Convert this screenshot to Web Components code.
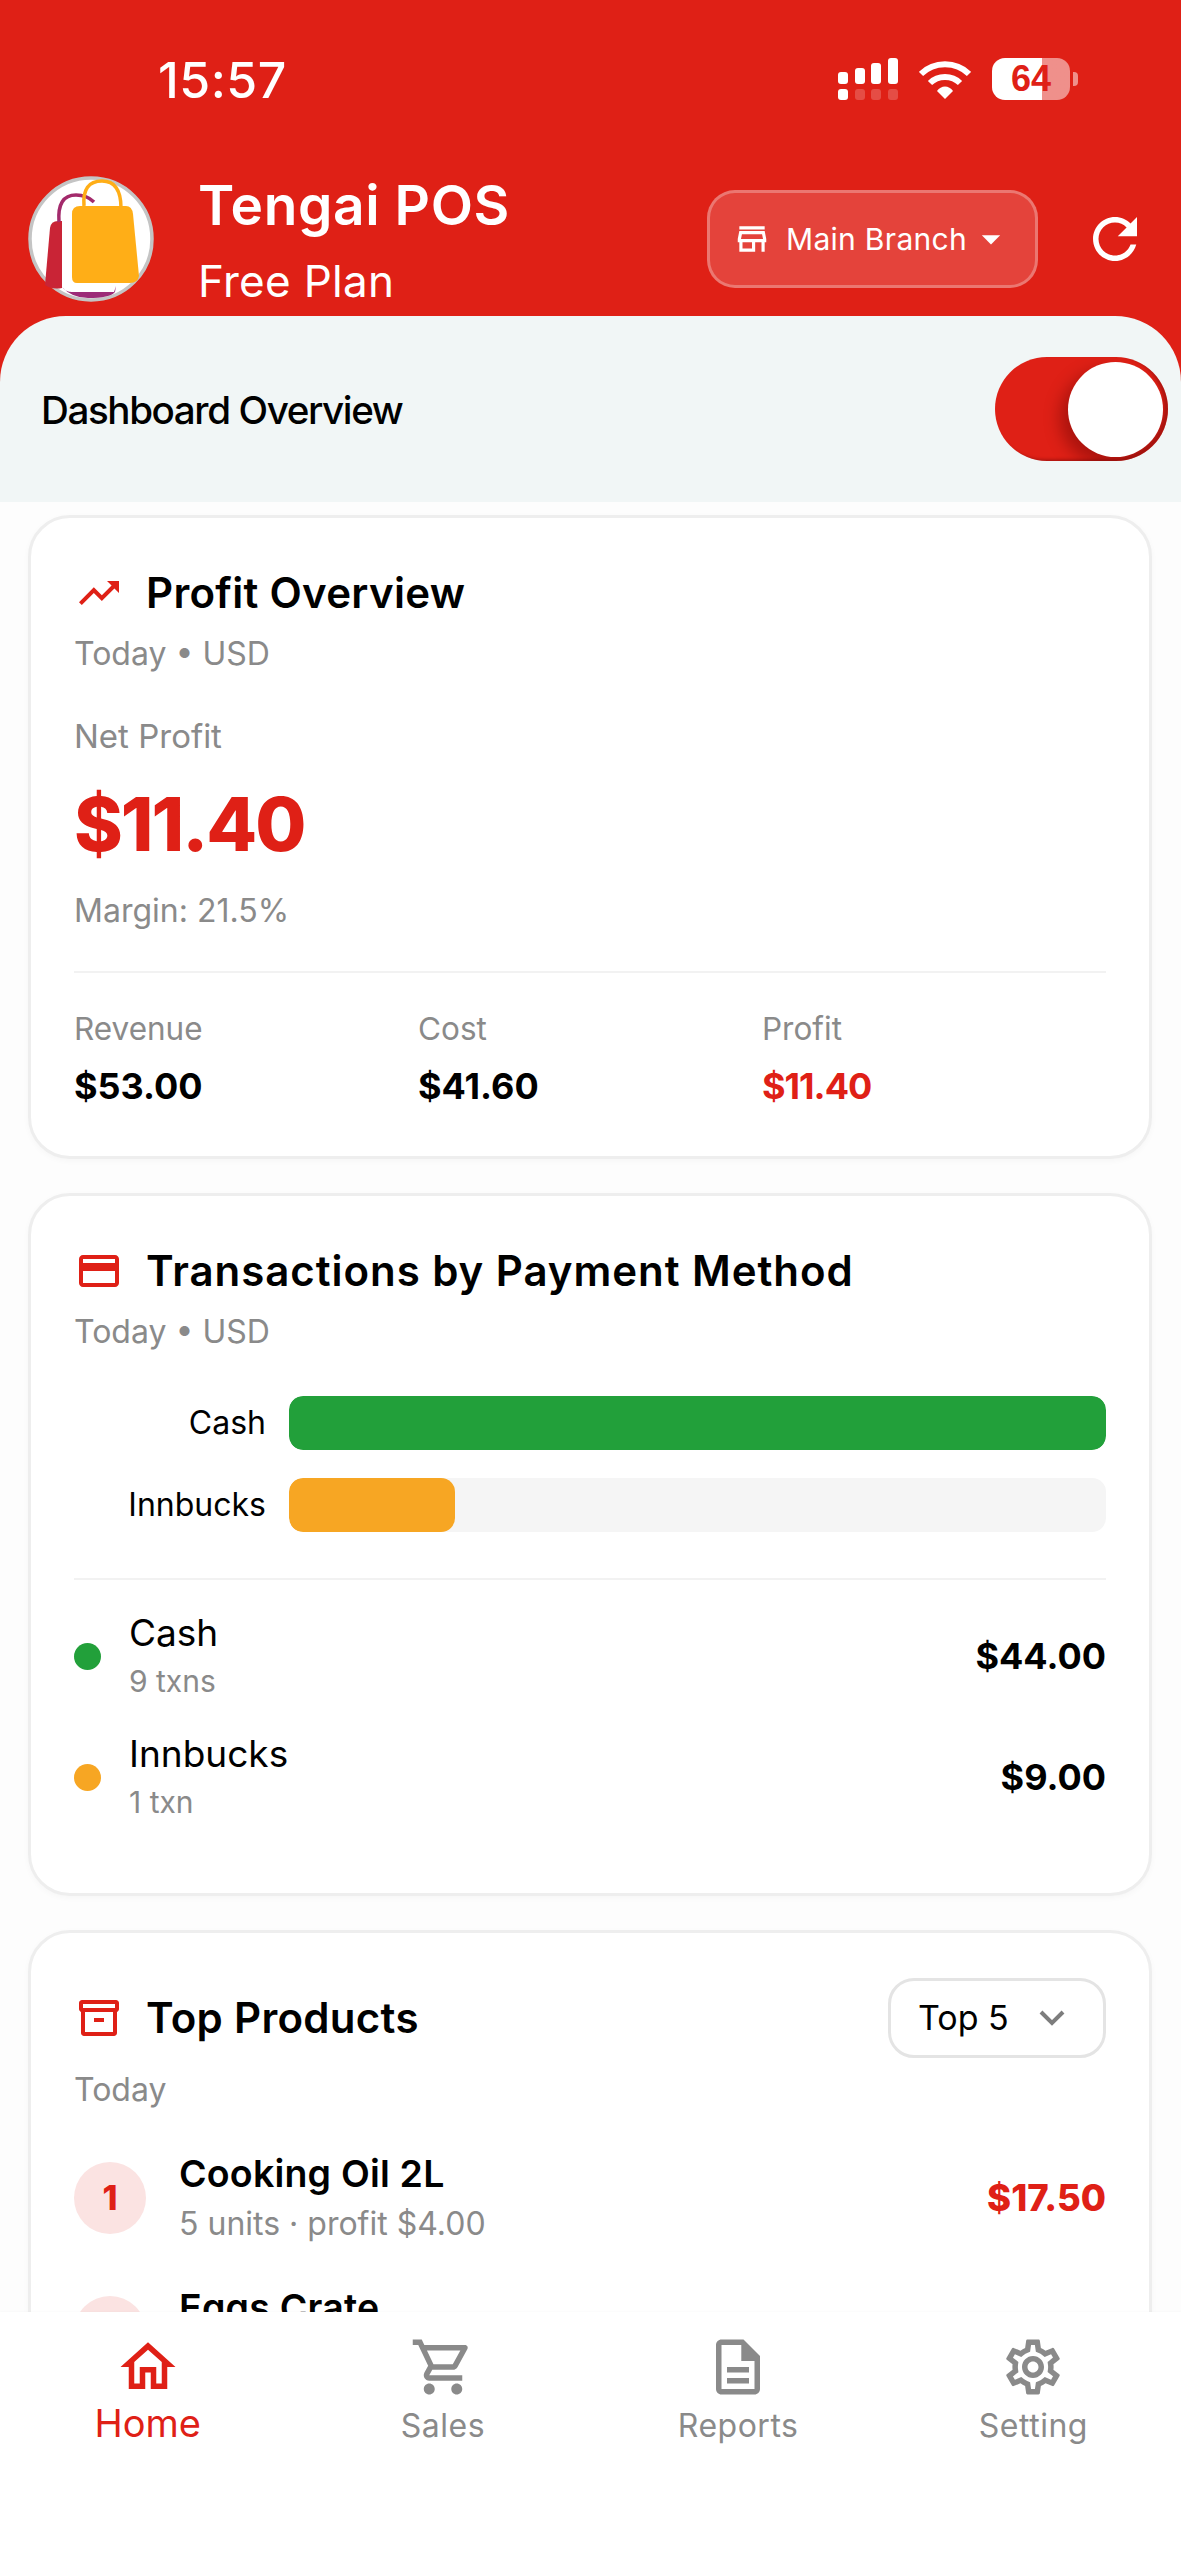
<!DOCTYPE html>
<html>
<head>
<meta charset="utf-8">
<style>
html, body { margin: 0; padding: 0; height: 2560px; overflow: hidden; background: #fdfdfd; }
body { font-family: "Inter", "Liberation Sans", sans-serif; color: #000; --red: #df2016; --grey: #8a8a8a; }
</style>
</head>
<body>
<pos-app>
  <status-bar slot="top"></status-bar>
  <app-header slot="top"></app-header>
  <dash-sheet slot="top">Dashboard Overview</dash-sheet>

  <info-card>
    <card-title icon="trend" sub="Today • USD">Profit Overview</card-title>
    <profit-summary></profit-summary>
  </info-card>

  <info-card pad="40">
    <card-title icon="card" sub="Today • USD" ls="0.95">Transactions by Payment Method</card-title>
    <pay-bars></pay-bars>
    <hr-line></hr-line>
    <pay-row color="#22a03a" name="Cash" sub="9 txns" amount="$44.00"></pay-row>
    <pay-row color="#f7a623" name="Innbucks" sub="1 txn" amount="$9.00"></pay-row>
  </info-card>

  <info-card>
    <card-title icon="box" sub="Today" row="80" gap="10">Top Products<top-select slot="action"></top-select></card-title>
    <product-row rank="1" name="Cooking Oil 2L" sub="5 units · profit $4.00" amount="$17.50" style="margin-top:38px"></product-row>
    <product-row rank="2" name="Eggs Crate" sub="3 units · profit $3.00" amount="$15.00"></product-row>
  </info-card>

  <tab-bar slot="bottom"></tab-bar>
</pos-app>

<script>
const ICONS = {
  trend: "M16 6l2.29 2.29-4.88 4.88-4-4L2 16.59 3.41 18l6-6 4 4 6.3-6.29L22 12V6z",
  card: "M20 4H4c-1.11 0-1.99.89-1.99 2L2 18c0 1.11.89 2 2 2h16c1.11 0 2-.89 2-2V6c0-1.11-.89-2-2-2zm0 14H4v-6h16v6zm0-10H4V6h16v2z",
  box: "M20.5 3h-17C2.67 3 2 3.67 2 4.5v3C2 8.2 2.5 8.8 3 8.95V19.5C3 20.33 3.67 21 4.5 21h15c.83 0 1.5-.67 1.5-1.5V8.95c.5-.15 1-.75 1-1.45v-3C22 3.67 21.33 3 20.5 3zM19 19H5V9h14v10zm1-12H4V5h16v2zM9.5 12h5v2h-5z",
  store: "M18.36 9l.6 3H5.04l.6-3h12.72M20 4H4v2h16V4zm0 3H4l-1 5v2h1v6h10v-6h4v6h2v-6h1v-2l-1-5zM6 18v-4h6v4H6z",
  refresh: "M17.65 6.35C16.2 4.9 14.21 4 12 4c-4.42 0-7.99 3.58-7.99 8s3.57 8 7.99 8c3.73 0 6.84-2.55 7.73-6h-2.08c-.82 2.33-3.04 4-5.65 4-3.31 0-6-2.69-6-6s2.69-6 6-6c1.66 0 3.14.69 4.22 1.78L13 11h7V4l-2.35 2.35z",
  caret: "M7 10l5 5 5-5z",
  home: "M12 5.69l5 4.5V18h-2v-6H9v6H7v-7.81l5-4.5M12 3L2 12h3v8h6v-6h2v6h6v-8h3L12 3z",
  cart: "M15.55 13c.75 0 1.41-.41 1.75-1.03l3.58-6.49c.37-.66-.11-1.48-.87-1.48H5.21l-.94-2H1v2h2l3.6 7.59-1.35 2.44C4.52 15.37 5.48 17 7 17h12v-2H7l1.1-2h7.45zM6.16 6h12.15l-2.76 5H8.53L6.16 6zM7 18c-1.1 0-1.99.9-1.99 2S5.9 22 7 22s2-.9 2-2-.9-2-2-2zm10 0c-1.1 0-1.99.9-1.99 2s.89 2 1.99 2 2-.9 2-2-.9-2-2-2z",
  doc: "M8 16h8v2H8zm0-4h8v2H8zM14 2H6c-1.1 0-2 .9-2 2v16c0 1.1.89 2 1.99 2H18c1.1 0 2-.9 2-2V8l-6-6zM18 20H6V4h7.2v5.8H18V20z",
  gear: "M19.43 12.98c.04-.32.07-.64.07-.98 0-.34-.03-.66-.07-.98l2.11-1.65c.19-.15.24-.42.12-.64l-2-3.46c-.09-.16-.26-.25-.44-.25-.06 0-.12.01-.17.03l-2.49 1c-.52-.4-1.08-.73-1.69-.98l-.38-2.65C14.46 2.18 14.25 2 14 2h-4c-.25 0-.46.18-.49.42l-.38 2.65c-.61.25-1.17.59-1.69.98l-2.49-1c-.06-.02-.12-.03-.18-.03-.17 0-.34.09-.43.25l-2 3.46c-.13.22-.07.49.12.64l2.11 1.65c-.04.32-.07.65-.07.98 0 .33.03.66.07.98l-2.11 1.65c-.19.15-.24.42-.12.64l2 3.46c.09.16.26.25.44.25.06 0 .12-.01.17-.03l2.49-1c.52.4 1.08.73 1.69.98l.38 2.65c.03.24.24.42.49.42h4c.25 0 .46-.18.49-.42l.38-2.65c.61-.25 1.17-.59 1.69-.98l2.49 1c.06.02.12.03.18.03.17 0 .34-.09.43-.25l2-3.46c.12-.22.07-.49-.12-.64l-2.11-1.65zm-1.98-1.71c.04.31.05.52.05.73 0 .21-.02.43-.05.73l-.14 1.13.89.7 1.08.84-.7 1.21-1.27-.51-1.04-.42-.9.68c-.43.32-.84.56-1.25.73l-1.06.43-.16 1.13-.2 1.35h-1.4l-.19-1.35-.16-1.13-1.06-.43c-.43-.18-.83-.41-1.23-.71l-.91-.7-1.06.43-1.27.51-.7-1.21 1.08-.84.89-.7-.14-1.13c-.03-.31-.05-.54-.05-.74s.02-.43.05-.73l.14-1.13-.89-.7-1.08-.84.7-1.21 1.27.51 1.04.42.9-.68c.43-.32.84-.56 1.25-.73l1.06-.43.16-1.13.2-1.35h1.39l.19 1.35.16 1.13 1.06.43c.43.18.83.41 1.23.71l.91.7 1.06-.43 1.27-.51.7 1.21-1.07.85-.89.7.14 1.13zM12 8c-2.21 0-4 1.79-4 4s1.79 4 4 4 4-1.79 4-4-1.79-4-4-4zm0 6c-1.1 0-2-.9-2-2s.9-2 2-2 2 .9 2 2-.9 2-2 2z"
};
const icon = (name, size) => `<svg width="${size}" height="${size}" viewBox="0 0 24 24" fill="currentColor"><path d="${ICONS[name]}"/></svg>`;

// every element is the same few lines, so keep them in one helper
function define(tag, html) {
  customElements.define(tag, class extends HTMLElement {
    constructor() {
      super();
      this.attachShadow({ mode: "open" });
    }
    connectedCallback() {
      const get = (n) => this.getAttribute(n) || "";
      this.shadowRoot.innerHTML = typeof html === "function" ? html(get) : html;
    }
  });
}

define("pos-app", `<style>
:host { display: flex; flex-direction: column; width: 1181px; height: 2560px; overflow: hidden; }
.scroll { flex: 1; min-height: 0; overflow: hidden; padding: 13px 29px 0 28px; display: flex; flex-direction: column; gap: 34px; }
</style><slot name="top"></slot><div class="scroll"><slot></slot></div><slot name="bottom"></slot>`);

define("status-bar", `<style>
:host { display: flex; align-items: center; height: 160px; box-sizing: border-box; padding: 0 111px 2px 158px; background: var(--red); color: #fff; justify-content: space-between; }
.time { font: 500 50px/1 "Inter", sans-serif; letter-spacing: 0.5px; margin-top: 2px; }
.right { display: flex; align-items: center; gap: 21px; }
.batt { position: relative; width: 78px; height: 42px; border-radius: 13px; background: linear-gradient(90deg, #fff 0 50px, rgba(255,255,255,.5) 50px); text-align: center; font: 700 36px/42px "Liberation Sans", sans-serif; color: var(--red); }
.batt::after { content: ""; position: absolute; left: 81px; top: 14px; width: 5px; height: 14px; border-radius: 0 4px 4px 0; background: rgba(255,255,255,.5); }
</style>
<div class="time">15:57</div>
<div class="right">
  <svg width="60" height="42" viewBox="0 0 60 42" fill="#fff">
    <rect x="0" y="14" width="10" height="12" rx="3"/><rect x="17" y="10" width="10" height="16" rx="3"/><rect x="33" y="5" width="10" height="21" rx="3"/><rect x="50" y="0" width="10" height="26" rx="3"/>
    <rect x="0" y="31" width="10" height="11" rx="3"/><g opacity=".2"><rect x="17" y="31" width="10" height="11" rx="3"/><rect x="33" y="31" width="10" height="11" rx="3"/><rect x="50" y="31" width="10" height="11" rx="3"/></g>
  </svg>
  <svg width="52" height="40" viewBox="0 0 52 40" fill="none" stroke="#fff" stroke-width="6"><path d="M2 15C15 2 37 2 50 15"/><path d="M11 24C19 16 33 16 41 24"/><path d="M18 32L26 40L34 32C30 26 22 26 18 32Z" fill="#fff" stroke="none"/></svg>
  <div class="batt">64</div>
</div>`);

define("app-header", `<style>
:host { display: flex; align-items: flex-start; height: 156px; box-sizing: border-box; background: var(--red); color: #fff; padding: 16px 33px 0 28px; }
.logo { width: 126px; height: 126px; flex: none; }
.names { margin-left: 44px; flex: 1; }
.name { font: 600 55px/62px "Inter", sans-serif; margin-top: -2px; letter-spacing: 0.6px; }
.plan { font: 400 44px/52px "Inter", sans-serif; margin-top: 19px; letter-spacing: 0.3px; }
.branch { width: 331px; height: 98px; box-sizing: border-box; margin-top: 14px; border: 3px solid rgba(255,255,255,.28); border-radius: 28px; background: rgba(255,255,255,.16); display: flex; align-items: center; padding-left: 23px; font: 400 30px/1 "Inter", sans-serif; letter-spacing: 0.3px; }
.branch span { margin: 0 2px 0 15px; }
.refresh { margin: 30px 0 0 44px; display: flex; }
</style>
<svg class="logo" viewBox="0 0 126 126">
  <circle cx="63" cy="63" r="61" fill="#fff" stroke="#c4c4c4" stroke-width="3.5"/>
  <path d="M17 109 L22 52 Q23 45 30 45 H34 V112 Q24 114 17 109Z" fill="#c92436"/>
  <path d="M31 46 Q29 19 48 19 Q59 19 66 26" fill="none" stroke="#a32a6b" stroke-width="3.5"/>
  <path d="M34 111 Q38 116 44 116 H86 L88 110 L87 116 Q82 122 60 122 Q44 122 34 111Z" fill="#9c2b77"/>
  <path d="M56 30 Q54 5 74 5 Q93 5 93 32" fill="none" stroke="#ffae17" stroke-width="3.5"/>
  <path d="M44 38 Q44 30 52 30 H98 Q104 30 105 38 L111 100 Q110 107 102 107 H49 Q44 107 44 101Z" fill="#ffae17"/>
</svg>
<div class="names"><div class="name">Tengai POS</div><div class="plan">Free Plan</div></div>
<div class="branch">${icon("store", 38)}<span>Main Branch</span>${icon("caret", 44)}</div>
<div class="refresh">${icon("refresh", 66)}</div>`);

define("dash-sheet", `<style>
:host { display: block; background: var(--red); }
.sheet { height: 186px; box-sizing: border-box; background: #f1f6f6; border-radius: 66px 66px 0 0; display: flex; align-items: center; justify-content: space-between; padding: 0 13px 0 41px; }
.title { font: 500 38.6px/1 "Inter", sans-serif; letter-spacing: -1.4px; margin-top: 2px; }
.toggle { position: relative; width: 173px; height: 104px; border-radius: 52px; overflow: hidden; margin-top: -1px; background: var(--red); box-shadow: inset -4px -2px 3px rgba(120,10,10,.45); }
.knob { position: absolute; right: 5px; top: 5px; width: 95px; height: 95px; border-radius: 50%; background: #fff; box-shadow: -8px 8px 16px rgba(90,0,0,.4); }
</style>
<div class="sheet"><div class="title"><slot></slot></div><div class="toggle"><div class="knob"></div></div></div>`);

define("info-card", (get) => `<style>
:host { display: block; flex: none; background: #fff; border: 3px solid #eeeeee; border-radius: 42px; padding: 45px 43px ${get("pad") || 46}px 43px; box-shadow: 0 2px 6px rgba(0,0,0,.03); }
</style><slot></slot>`);

define("card-title", (get) => `<style>
:host { display: block; }
.row { display: flex; align-items: center; height: ${get("row") || 60}px; }
svg { color: var(--red); flex: none; margin-left: 1px; }
.t { font: 600 42px/60px "Inter", sans-serif; margin-left: 23px; flex: 1; letter-spacing: ${get("ls") || 0.3}px; }
.sub { font: 400 32px/44px "Inter", sans-serif; color: var(--grey); margin-top: ${get("gap") || 9}px; }
</style>
<div class="row">${icon(get("icon"), 48)}<div class="t"><slot></slot></div><slot name="action"></slot></div>
<div class="sub">${get("sub")}</div>`);

define("profit-summary", `<style>
:host { display: block; }
.lbl { font: 400 32px/44px "Inter", sans-serif; color: var(--grey); }
.big { font: 800 74px/100px "Inter", sans-serif; color: var(--red); margin-top: 16px; letter-spacing: -2px; }
.line { height: 2px; background: #f2f2f2; margin: 38px 0 36px; }
.stats { display: grid; grid-template-columns: 344px 344px 1fr; }
.k { font: 400 31.5px/40px "Inter", sans-serif; color: var(--grey); }
.v { font: 700 36px/48px "Inter", sans-serif; margin-top: 13px; }
.red { color: var(--red); letter-spacing: -1px; }
</style>
<div class="lbl" style="margin-top:38px;font-size:33px">Net Profit</div>
<div class="big">$11.40</div>
<div class="lbl" style="margin-top:15px">Margin: 21.5%</div>
<div class="line"></div>
<div class="stats">
  <div><div class="k">Revenue</div><div class="v">$53.00</div></div>
  <div><div class="k">Cost</div><div class="v">$41.60</div></div>
  <div><div class="k">Profit</div><div class="v red">$11.40</div></div>
</div>`);

define("pay-bars", `<style>
:host { display: grid; grid-template-columns: 192px 1fr; column-gap: 23px; row-gap: 28px; margin-top: 42px; align-items: center; }
.l { text-align: right; font: 400 32px/54px "Inter", sans-serif; }
.track { height: 54px; border-radius: 14px; background: #f5f5f5; overflow: hidden; }
.fill { height: 100%; border-radius: 14px; }
</style>
<div class="l">Cash</div><div class="track"><div class="fill" style="width:100%;background:#22a03a"></div></div>
<div class="l">Innbucks</div><div class="track"><div class="fill" style="width:20.3%;background:#f7a623"></div></div>`);

define("hr-line", `<style>:host { display: block; height: 2px; background: #f2f2f2; margin: 46px 0 31px; }</style>`);

define("pay-row", (get) => `<style>
:host { display: flex; align-items: center; height: 90px; margin-bottom: 31px; }
.dot { width: 27px; height: 27px; border-radius: 50%; background: ${get("color")}; flex: none; margin-right: 28px; }
.m { flex: 1; }
.n { font: 400 37px/44px "Inter", sans-serif; }
.s { font: 400 30px/40px "Inter", sans-serif; color: var(--grey); margin-top: 6px; }
.a { font: 700 36px/1 "Inter", sans-serif; }
</style>
<div class="dot"></div><div class="m"><div class="n">${get("name")}</div><div class="s">${get("sub")}</div></div><div class="a">${get("amount")}</div>`);

define("top-select", `<style>
:host { display: flex; align-items: center; flex: none; box-sizing: border-box; width: 218px; height: 80px; border: 3px solid #e4e4e4; border-radius: 26px; padding-left: 27px; font: 400 34px/1 "Inter", sans-serif; }
svg { margin-left: 30px; }
</style><span>Top 5</span><svg width="26" height="16" viewBox="0 0 26 16" fill="none" stroke="#7d7d7d" stroke-width="4"><path d="M2 2L13 13L24 2"/></svg>`);

define("product-row", (get) => `<style>
:host { display: flex; align-items: center; height: 96px; margin-top: 38px; }
.r { width: 72px; height: 72px; border-radius: 50%; background: #fbe3e2; color: var(--red); display: flex; align-items: center; justify-content: center; font: 800 34px/1 "Inter", sans-serif; flex: none; margin: 0 33px 0 0; }
.m { flex: 1; }
.n { font: 600 37.5px/48px "Inter", sans-serif; letter-spacing: 0.2px; }
.s { font: 400 32px/44px "Inter", sans-serif; color: var(--grey); margin-top: 4px; }
.a { font: 800 36.5px/1 "Inter", sans-serif; color: var(--red); }
</style>
<div class="r">${get("rank")}</div><div class="m"><div class="n">${get("name")}</div><div class="s">${get("sub")}</div></div><div class="a">${get("amount")}</div>`);

define("tab-bar", `<style>
:host { display: grid; grid-template-columns: repeat(4, 1fr); height: 248px; background: #fff; flex: none; position: relative; box-shadow: 0 -1px 2px rgba(0,0,0,.02); }
.tab { display: flex; flex-direction: column; align-items: center; padding-top: 21.5px; color: var(--grey); font: 400 32px/44px "Inter", sans-serif; letter-spacing: 0.5px; }
.tab svg { display: block; }
.tab span { margin-top: 4px; }
.on { color: var(--red); font-size: 38px; letter-spacing: 0; }
.on span { margin-top: 1px; }
</style>
<div class="tab on">${icon("home", 66)}<span>Home</span></div>
<div class="tab">${icon("cart", 66)}<span>Sales</span></div>
<div class="tab">${icon("doc", 66)}<span>Reports</span></div>
<div class="tab">${icon("gear", 66)}<span>Setting</span></div>`);
</script>
</body>
</html>
